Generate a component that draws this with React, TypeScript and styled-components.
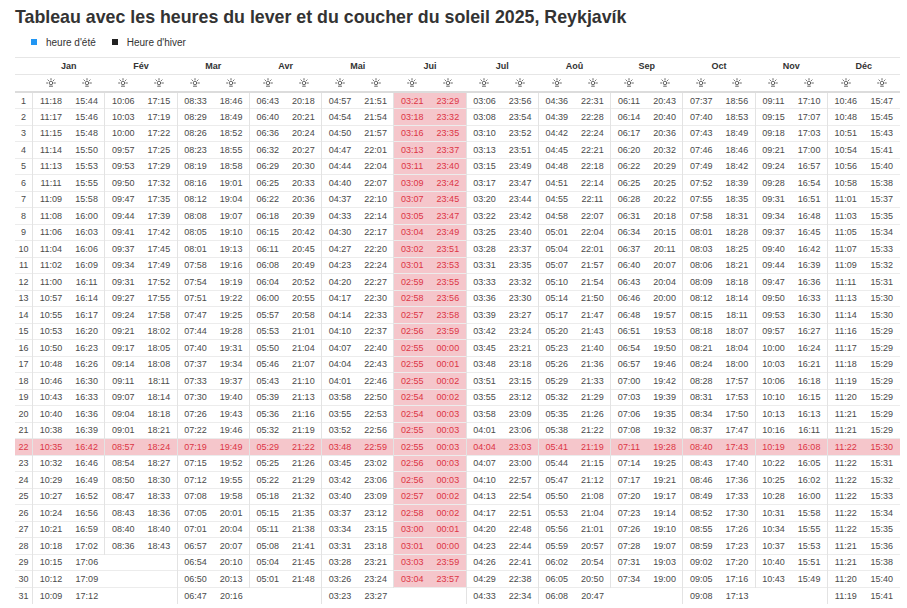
import React from "react";
import styled, { createGlobalStyle } from "styled-components";

const GlobalStyle = createGlobalStyle`
  body {
    margin: 0;
    background: #fff;
    font-family: "Liberation Sans", Arial, sans-serif;
    color: #444;
  }
`;

const Page = styled.div`
  padding: 0 7px 0 15px;
`;

const Title = styled.h1`
  margin: 0;
  padding-top: 6px;
  font-size: 17.8px;
  line-height: 22px;
  font-weight: 700;
  color: #333;
`;

const Legend = styled.div`
  display: flex;
  align-items: center;
  gap: 16px;
  padding: 5px 0 0 16px;
  height: 18px;
  font-size: 10px;
  color: #333;
`;

const LegendItem = styled.span`
  display: flex;
  align-items: center;
  gap: 9px;
`;

const Swatch = styled.span<{ $color: string }>`
  flex: none;
  width: 6px;
  height: 6px;
  background: ${(p) => p.$color};
`;

const Table = styled.table`
  width: 885px;
  margin-top: 6px;
  border-collapse: collapse;
  table-layout: fixed;
  font-size: 9px;
`;

const HeadCell = styled.th<{ $thick?: boolean }>`
  height: 16px;
  padding: 0;
  font-weight: 700;
  color: #333;
  text-align: center;
  border-top: 1px solid #e6e6e6;
  border-bottom: ${(p) => (p.$thick ? "2px solid #dcdcdc" : "none")};
`;

const Row = styled.tr<{ $today?: boolean }>`
  height: 16.5px;
  background: ${(p) => (p.$today ? "#f5c6cb" : "transparent")};
  color: ${(p) => (p.$today ? "#dc3545" : "#4a4a4a")};
`;

const Cell = styled.td<{ $monthStart?: boolean; $hot?: boolean }>`
  padding: 0;
  text-align: center;
  white-space: nowrap;
  border-top: 1px solid #ececec;
  border-left: ${(p) => (p.$monthStart ? "1px solid #e3e3e3" : "none")};
  background: ${(p) => (p.$hot ? "#f5c6cb" : "transparent")};
  color: ${(p) => (p.$hot ? "#dc3545" : "inherit")};
`;

const DayCell = styled.td`
  padding: 0;
  text-align: center;
  border-top: 1px solid #ececec;
`;

const months = ["Jan", "Fév", "Mar", "Avr", "Mai", "Jui", "Jul", "Aoû", "Sep", "Oct", "Nov", "Déc"];
const currentMonth = 5;
const today = 22;

const rows = [
  "11:18 15:44 10:06 17:15 08:33 18:46 06:43 20:18 04:57 21:51 03:21 23:29 03:06 23:56 04:36 22:31 06:11 20:43 07:37 18:56 09:11 17:10 10:46 15:47",
  "11:17 15:46 10:03 17:19 08:29 18:49 06:40 20:21 04:54 21:54 03:18 23:32 03:08 23:54 04:39 22:28 06:14 20:40 07:40 18:53 09:15 17:07 10:48 15:45",
  "11:15 15:48 10:00 17:22 08:26 18:52 06:36 20:24 04:50 21:57 03:16 23:35 03:10 23:52 04:42 22:24 06:17 20:36 07:43 18:49 09:18 17:03 10:51 15:43",
  "11:14 15:50 09:57 17:25 08:23 18:55 06:32 20:27 04:47 22:01 03:13 23:37 03:13 23:51 04:45 22:21 06:20 20:32 07:46 18:46 09:21 17:00 10:54 15:41",
  "11:13 15:53 09:53 17:29 08:19 18:58 06:29 20:30 04:44 22:04 03:11 23:40 03:15 23:49 04:48 22:18 06:22 20:29 07:49 18:42 09:24 16:57 10:56 15:40",
  "11:11 15:55 09:50 17:32 08:16 19:01 06:25 20:33 04:40 22:07 03:09 23:42 03:17 23:47 04:51 22:14 06:25 20:25 07:52 18:39 09:28 16:54 10:58 15:38",
  "11:09 15:58 09:47 17:35 08:12 19:04 06:22 20:36 04:37 22:10 03:07 23:45 03:20 23:44 04:55 22:11 06:28 20:22 07:55 18:35 09:31 16:51 11:01 15:37",
  "11:08 16:00 09:44 17:39 08:08 19:07 06:18 20:39 04:33 22:14 03:05 23:47 03:22 23:42 04:58 22:07 06:31 20:18 07:58 18:31 09:34 16:48 11:03 15:35",
  "11:06 16:03 09:41 17:42 08:05 19:10 06:15 20:42 04:30 22:17 03:04 23:49 03:25 23:40 05:01 22:04 06:34 20:15 08:01 18:28 09:37 16:45 11:05 15:34",
  "11:04 16:06 09:37 17:45 08:01 19:13 06:11 20:45 04:27 22:20 03:02 23:51 03:28 23:37 05:04 22:01 06:37 20:11 08:03 18:25 09:40 16:42 11:07 15:33",
  "11:02 16:09 09:34 17:49 07:58 19:16 06:08 20:49 04:23 22:24 03:01 23:53 03:31 23:35 05:07 21:57 06:40 20:07 08:06 18:21 09:44 16:39 11:09 15:32",
  "11:00 16:11 09:31 17:52 07:54 19:19 06:04 20:52 04:20 22:27 02:59 23:55 03:33 23:32 05:10 21:54 06:43 20:04 08:09 18:18 09:47 16:36 11:11 15:31",
  "10:57 16:14 09:27 17:55 07:51 19:22 06:00 20:55 04:17 22:30 02:58 23:56 03:36 23:30 05:14 21:50 06:46 20:00 08:12 18:14 09:50 16:33 11:13 15:30",
  "10:55 16:17 09:24 17:58 07:47 19:25 05:57 20:58 04:14 22:33 02:57 23:58 03:39 23:27 05:17 21:47 06:48 19:57 08:15 18:11 09:53 16:30 11:14 15:30",
  "10:53 16:20 09:21 18:02 07:44 19:28 05:53 21:01 04:10 22:37 02:56 23:59 03:42 23:24 05:20 21:43 06:51 19:53 08:18 18:07 09:57 16:27 11:16 15:29",
  "10:50 16:23 09:17 18:05 07:40 19:31 05:50 21:04 04:07 22:40 02:55 00:00 03:45 23:21 05:23 21:40 06:54 19:50 08:21 18:04 10:00 16:24 11:17 15:29",
  "10:48 16:26 09:14 18:08 07:37 19:34 05:46 21:07 04:04 22:43 02:55 00:01 03:48 23:18 05:26 21:36 06:57 19:46 08:24 18:00 10:03 16:21 11:18 15:29",
  "10:46 16:30 09:11 18:11 07:33 19:37 05:43 21:10 04:01 22:46 02:55 00:02 03:51 23:15 05:29 21:33 07:00 19:42 08:28 17:57 10:06 16:18 11:19 15:29",
  "10:43 16:33 09:07 18:14 07:30 19:40 05:39 21:13 03:58 22:50 02:54 00:02 03:55 23:12 05:32 21:29 07:03 19:39 08:31 17:53 10:10 16:15 11:20 15:29",
  "10:40 16:36 09:04 18:18 07:26 19:43 05:36 21:16 03:55 22:53 02:54 00:03 03:58 23:09 05:35 21:26 07:06 19:35 08:34 17:50 10:13 16:13 11:21 15:29",
  "10:38 16:39 09:01 18:21 07:22 19:46 05:32 21:19 03:52 22:56 02:55 00:03 04:01 23:06 05:38 21:22 07:08 19:32 08:37 17:47 10:16 16:11 11:21 15:29",
  "10:35 16:42 08:57 18:24 07:19 19:49 05:29 21:22 03:48 22:59 02:55 00:03 04:04 23:03 05:41 21:19 07:11 19:28 08:40 17:43 10:19 16:08 11:22 15:30",
  "10:32 16:46 08:54 18:27 07:15 19:52 05:25 21:26 03:45 23:02 02:56 00:03 04:07 23:00 05:44 21:15 07:14 19:25 08:43 17:40 10:22 16:05 11:22 15:31",
  "10:29 16:49 08:50 18:30 07:12 19:55 05:22 21:29 03:42 23:06 02:56 00:03 04:10 22:57 05:47 21:12 07:17 19:21 08:46 17:36 10:25 16:02 11:22 15:32",
  "10:27 16:52 08:47 18:33 07:08 19:58 05:18 21:32 03:40 23:09 02:57 00:02 04:13 22:54 05:50 21:08 07:20 19:17 08:49 17:33 10:28 16:00 11:22 15:33",
  "10:24 16:56 08:43 18:36 07:05 20:01 05:15 21:35 03:37 23:12 02:58 00:02 04:17 22:51 05:53 21:04 07:23 19:14 08:52 17:30 10:31 15:58 11:22 15:34",
  "10:21 16:59 08:40 18:40 07:01 20:04 05:11 21:38 03:34 23:15 03:00 00:01 04:20 22:48 05:56 21:01 07:26 19:10 08:55 17:26 10:34 15:55 11:22 15:35",
  "10:18 17:02 08:36 18:43 06:57 20:07 05:08 21:41 03:31 23:18 03:01 00:00 04:23 22:44 05:59 20:57 07:28 19:07 08:59 17:23 10:37 15:53 11:21 15:36",
  "10:15 17:06 - - 06:54 20:10 05:04 21:45 03:28 23:21 03:03 23:59 04:26 22:41 06:02 20:54 07:31 19:03 09:02 17:20 10:40 15:51 11:21 15:38",
  "10:12 17:09 - - 06:50 20:13 05:01 21:48 03:26 23:24 03:04 23:57 04:29 22:38 06:05 20:50 07:34 19:00 09:05 17:16 10:43 15:49 11:20 15:40",
  "10:09 17:12 - - 06:47 20:16 - - 03:23 23:27 - - 04:33 22:34 06:08 20:47 - - 09:08 17:13 - - 11:19 15:41",
].map((r) => r.split(" "));

const SunIcon = ({ rise }: { rise?: boolean }) => (
  <svg width="10" height="9" viewBox="0 0 10 9" fill="none" stroke="#555" strokeWidth="0.9" strokeLinecap="round">
    <circle cx="5" cy="5" r="1.8" />
    <line x1="5" y1="0.6" x2="5" y2="1.8" />
    <line x1="1.9" y1="1.9" x2="2.6" y2="2.6" />
    <line x1="8.1" y1="1.9" x2="7.4" y2="2.6" />
    <line x1="0.6" y1="5" x2="1.6" y2="5" />
    <line x1="8.4" y1="5" x2="9.4" y2="5" />
    <line x1={rise ? 3.4 : 3.6} y1="8.2" x2={rise ? 6.6 : 6.4} y2="8.2" />
  </svg>
);

export default function App() {
  return (
    <Page>
      <GlobalStyle />
      <Title>Tableau avec les heures du lever et du coucher du soleil 2025, Reykjavík</Title>
      <Legend>
        <LegendItem>
          <Swatch $color="#2196f3" />
          <span>heure d'été</span>
        </LegendItem>
        <LegendItem>
          <Swatch $color="#222" />
          <span>Heure d'hiver</span>
        </LegendItem>
      </Legend>
      <Table>
        <colgroup>
          <col style={{ width: 17.7 }} />
          {Array.from({ length: 24 }).map((_, i) => (
            <col key={i} />
          ))}
        </colgroup>
        <thead>
          <tr>
            <HeadCell />
            {months.map((m) => (
              <HeadCell key={m} colSpan={2}>
                {m}
              </HeadCell>
            ))}
          </tr>
          <tr>
            <HeadCell $thick />
            {months.map((m) => (
              <React.Fragment key={m}>
                <HeadCell $thick>
                  <SunIcon rise />
                </HeadCell>
                <HeadCell $thick>
                  <SunIcon />
                </HeadCell>
              </React.Fragment>
            ))}
          </tr>
        </thead>
        <tbody>
          {rows.map((r, d) => (
            <Row key={d} $today={d + 1 === today}>
              <DayCell>{d + 1}</DayCell>
              {r.map((v, i) => {
                const m = Math.floor(i / 2);
                const has = v !== "-";
                return (
                  <Cell key={i} $monthStart={has && i % 2 === 0} $hot={has && m === currentMonth}>
                    {has ? v : ""}
                  </Cell>
                );
              })}
            </Row>
          ))}
        </tbody>
      </Table>
    </Page>
  );
}
